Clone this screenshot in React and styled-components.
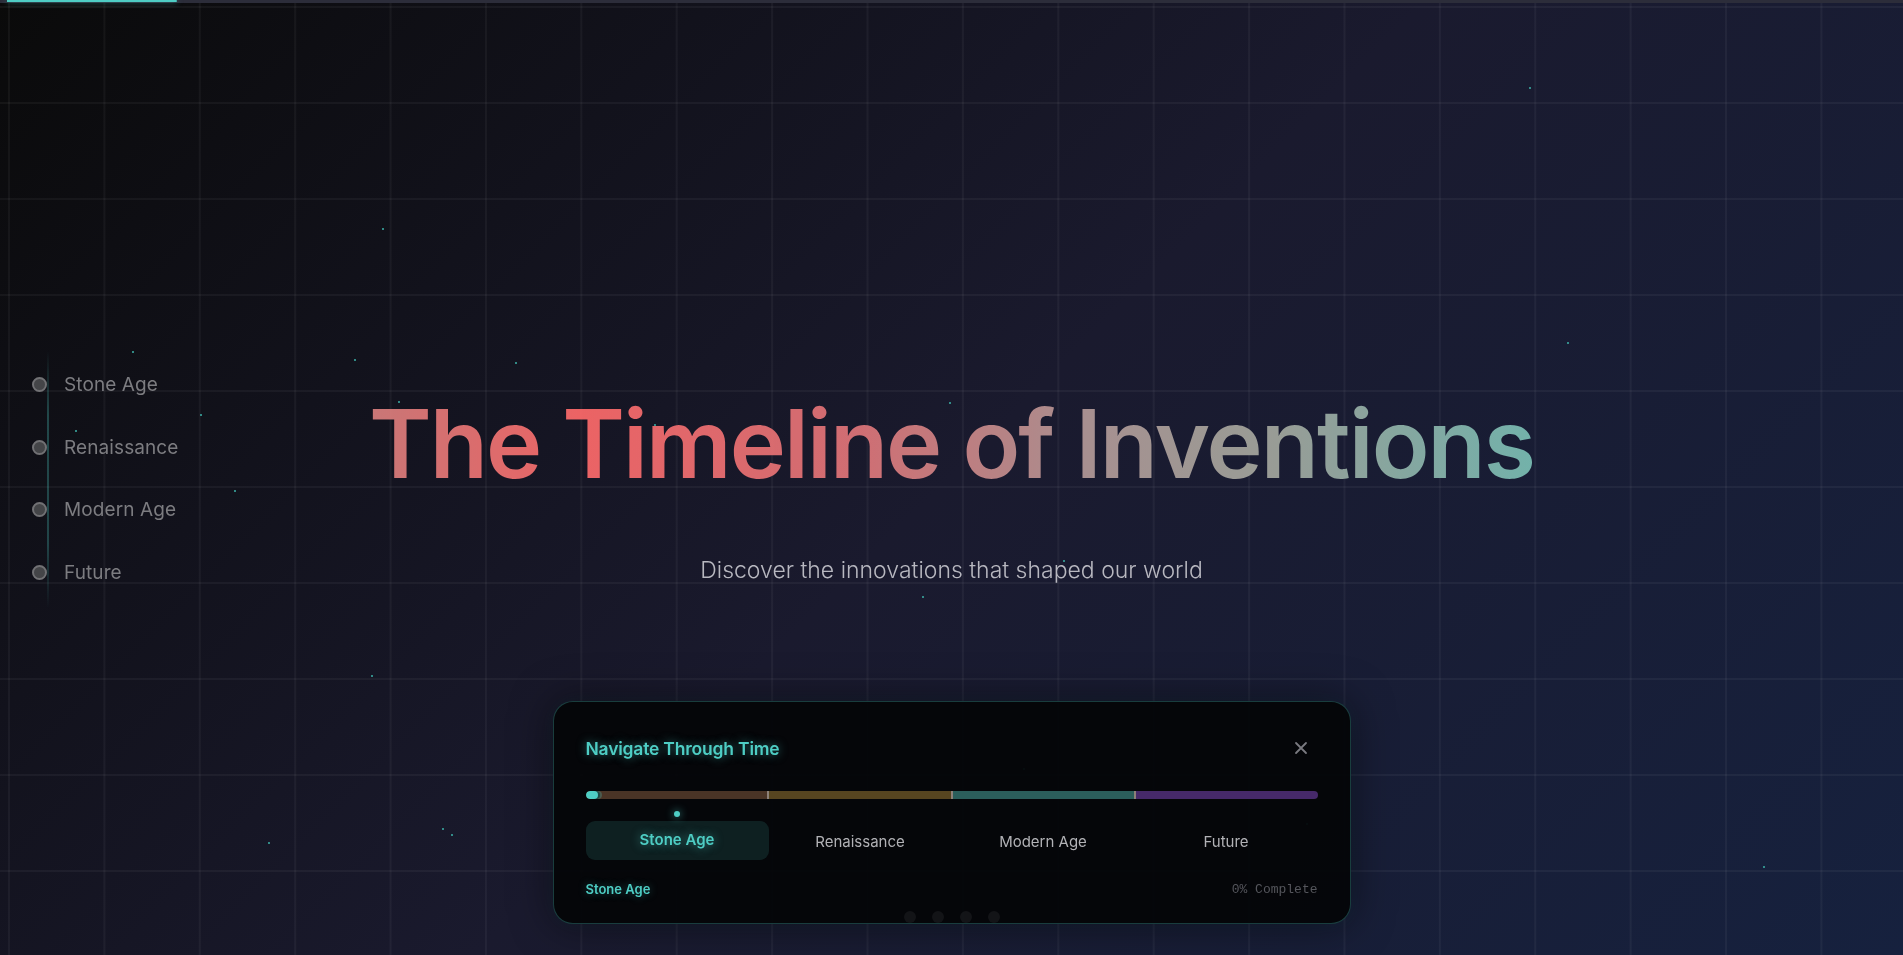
import React from 'react';
import styled, { createGlobalStyle } from 'styled-components';

const eras = [
  { name: 'Stone Age', color: '#4a3426' },
  { name: 'Renaissance', color: '#574520' },
  { name: 'Modern Age', color: '#2b5e5b' },
  { name: 'Future', color: '#46296a' },
];

// little teal specks on the background, [x, y]
const stars = [
  [1529, 87], [382, 228], [132, 351], [354, 359], [515, 362], [1567, 342],
  [398, 401], [949, 402], [200, 414], [75, 430], [654, 424], [234, 490],
  [922, 596], [1063, 560], [371, 675], [1023, 768], [268, 842], [442, 828],
  [451, 834], [1763, 866], [1306, 823],
];

const GlobalStyle = createGlobalStyle`
  html, body {
    margin: 0;
    padding: 0;
    height: 100%;
    overflow: hidden;
  }
  body {
    font-family: Inter, "Noto Sans", sans-serif;
    background: linear-gradient(135deg, #0a0a0a 0%, #1a1a2e 50%, #16213e 100%);
    color: #fff;
  }
`;

function App() {
  return (
    <Page>
      <GlobalStyle />
      <TopTrack>
        <TopFill />
      </TopTrack>

      {stars.map(([x, y], i) => (
        <Star key={i} style={{ left: x, top: y }} />
      ))}

      <SideNav>
        {eras.map(era => (
          <SideItem key={era.name}>
            <SideDot />
            <SideLabel>{era.name}</SideLabel>
          </SideItem>
        ))}
      </SideNav>

      <Hero>
        <Title>The Timeline of Inventions</Title>
        <Subtitle>Discover the innovations that shaped our world</Subtitle>

        <Panel>
          <PanelHead>
            <PanelTitle>Navigate Through Time</PanelTitle>
            <CloseButton aria-label="close">
              <svg width="14" height="14" viewBox="0 0 14 14">
                <path d="M2 2 L12 12 M12 2 L2 12" stroke="#7a7a80" strokeWidth="1.8" strokeLinecap="round" />
              </svg>
            </CloseButton>
          </PanelHead>

          <Bar>
            {eras.map((era, i) => (
              <Segment key={era.name} color={era.color} first={i === 0} />
            ))}
            <BarFill />
          </Bar>

          <Tabs>
            {eras.map((era, i) => (
              <Tab key={era.name} active={i === 0}>{era.name}</Tab>
            ))}
          </Tabs>

          <PanelFoot>
            <Current>Stone Age</Current>
            <Percent>0% Complete</Percent>
          </PanelFoot>
        </Panel>
      </Hero>

      <PageDots>
        {eras.map(era => <PageDot key={era.name} />)}
      </PageDots>
    </Page>
  );
}

const Page = styled.div`
  position: relative;
  height: 955px;
  overflow: hidden;
  background-image:
    linear-gradient(90deg, rgba(255, 255, 255, 0.045) 2px, transparent 2px),
    linear-gradient(0deg, rgba(255, 255, 255, 0.045) 2px, transparent 2px);
  background-size: 95.4px 96px;
  background-position: 8px 8px;
`;

const TopTrack = styled.div`
  position: fixed;
  top: 0;
  left: 0;
  right: 0;
  height: 3px;
  background: #2c2d3a;
  z-index: 10;
`;

const TopFill = styled.div`
  margin-left: 7px;
  width: 170px;
  height: 2px;
  border-radius: 0 2px 2px 0;
  background: #4ecdc4;
  box-shadow: 0 0 6px rgba(78, 205, 196, 0.6);
`;

const Star = styled.span`
  position: absolute;
  width: 2px;
  height: 2px;
  background: #3aa7a0;
  opacity: 0.8;
`;

const SideNav = styled.nav`
  position: fixed;
  left: 32px;
  top: 350px;
  display: flex;
  flex-direction: column;
  gap: 38px;
  padding: 22px 0 24px;
  &::before {
    content: '';
    position: absolute;
    left: 15px;
    top: 0;
    bottom: 0;
    width: 2px;
    background: linear-gradient(180deg, transparent, rgba(78, 205, 196, 0.3) 25%, rgba(78, 205, 196, 0.28) 75%, transparent);
  }
`;

const SideItem = styled.div`
  position: relative;
  display: flex;
  align-items: center;
  gap: 17px;
  height: 24.7px;
`;

const SideDot = styled.span`
  width: 11px;
  height: 11px;
  border-radius: 50%;
  background: #444548;
  border: 2px solid #717174;
`;

const SideLabel = styled.span`
  font-size: 19px;
  color: #7c7c80;
  letter-spacing: 0.1px;
`;

const Hero = styled.main`
  position: relative;
  display: flex;
  flex-direction: column;
  align-items: center;
  padding-top: 385px;
`;

const Title = styled.h1`
  margin: 0;
  font-size: 95px;
  font-weight: 600;
  line-height: 118px;
  letter-spacing: -1.9px;
  background: linear-gradient(90deg, #d9807f 0%, #ff6b6b 18%, #e0767a 42%, #b39b9a 62%, #a3a89f 78%, #7bbfb5 100%);
  -webkit-background-clip: text;
  background-clip: text;
  color: transparent;
  opacity: 0.92;
`;

const Subtitle = styled.p`
  margin: 54px 0 0;
  font-size: 23px;
  line-height: 26px;
  font-weight: 300;
  color: #b8b8c0;
`;

const Panel = styled.section`
  box-sizing: border-box;
  width: 798px;
  margin-top: 118px;
  padding: 33px 32px 25px;
  border-radius: 20px;
  border: 1px solid rgba(78, 205, 196, 0.28);
  background: rgba(4, 5, 7, 0.95);
  box-shadow: 0 0 40px rgba(0, 0, 0, 0.5), 0 0 18px rgba(78, 205, 196, 0.06);
`;

const PanelHead = styled.div`
  display: flex;
  align-items: center;
  justify-content: space-between;
  height: 26px;
`;

const PanelTitle = styled.h2`
  margin: 0;
  font-size: 17.5px;
  font-weight: 600;
  color: #4ecdc4;
  letter-spacing: -0.2px;
  text-shadow: 0 0 10px rgba(78, 205, 196, 0.55);
`;

const CloseButton = styled.button`
  display: flex;
  align-items: center;
  justify-content: center;
  width: 24px;
  height: 24px;
  margin-right: 5px;
  padding: 0;
  border: none;
  background: none;
`;

const Bar = styled.div`
  position: relative;
  display: flex;
  height: 8px;
  margin-top: 30px;
  border-radius: 4px;
  overflow: hidden;
`;

const Segment = styled.div`
  flex: 1;
  background: ${p => p.color};
  border-left: ${p => (p.first ? 'none' : '2px solid #8c8078')};
`;

const BarFill = styled.div`
  position: absolute;
  left: 0;
  top: 0;
  width: 12px;
  height: 8px;
  border-radius: 4px;
  background: #4ecdc4;
  box-shadow: 2px 0 0 #1e4a47, 4px 0 0 rgba(78, 205, 196, 0.25);
`;

const Tabs = styled.div`
  display: grid;
  grid-template-columns: repeat(4, 1fr);
  margin-top: 22px;
`;

const Tab = styled.button`
  position: relative;
  height: 39px;
  border: none;
  border-radius: 9px;
  font-family: Inter, "Noto Sans", sans-serif;
  font-size: 15px;
  font-weight: ${p => (p.active ? 600 : 400)};
  color: ${p => (p.active ? '#4ecdc4' : '#b2b2b6')};
  background: ${p => (p.active ? 'rgba(78, 205, 196, 0.13)' : 'transparent')};
  text-shadow: ${p => (p.active ? '0 0 10px rgba(78, 205, 196, 0.6)' : 'none')};
  padding: ${p => (p.active ? '0 0 2px' : '2px 0 0')};
  &::before {
    content: '';
    display: ${p => (p.active ? 'block' : 'none')};
    position: absolute;
    left: 50%;
    top: -10px;
    width: 6px;
    height: 6px;
    margin-left: -3px;
    border-radius: 50%;
    background: #4ecdc4;
    box-shadow: 0 0 8px rgba(78, 205, 196, 0.8);
  }
`;

const PanelFoot = styled.div`
  display: flex;
  align-items: center;
  justify-content: space-between;
  margin-top: 20px;
  height: 18px;
`;

const Current = styled.span`
  font-size: 13px;
  font-weight: 600;
  color: #4ecdc4;
  text-shadow: 0 0 8px rgba(78, 205, 196, 0.4);
`;

const Percent = styled.span`
  font-family: "Liberation Mono", "DejaVu Sans Mono", monospace;
  font-size: 13px;
  color: #55565c;
`;

const PageDots = styled.div`
  position: fixed;
  left: 0;
  right: 0;
  bottom: 32px;
  display: flex;
  justify-content: center;
  gap: 16px;
`;

const PageDot = styled.span`
  width: 12px;
  height: 12px;
  border-radius: 50%;
  background: rgba(255, 255, 255, 0.06);
`;

export default App;
